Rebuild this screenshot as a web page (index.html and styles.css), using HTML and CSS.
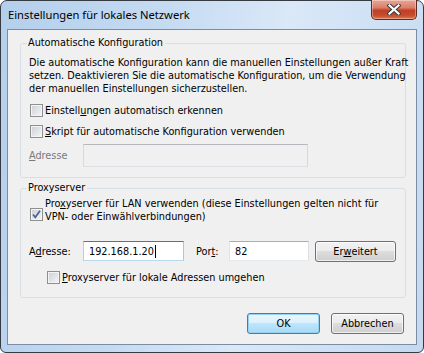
FILE: index.html
```html
<!DOCTYPE html>
<html>

<head>
    <title>Einstellungen für lokales Netzwerk</title>
    <link rel="stylesheet" href="styles.css">
</head>

<body>
    <div class="window">
        <div class="titlebar">
            <span class="title">Einstellungen für lokales Netzwerk</span>
            <button class="close" aria-label="Schließen">
                <svg width="14" height="11" viewBox="0 0 14 11">
                    <path d="M2.5 1.5 L11.5 9.5 M11.5 1.5 L2.5 9.5" stroke="#3b3b3b" stroke-width="4.2" stroke-linecap="square" fill="none"/>
                    <path d="M2.5 1.5 L11.5 9.5 M11.5 1.5 L2.5 9.5" stroke="#ffffff" stroke-width="2.2" stroke-linecap="square" fill="none"/>
                </svg>
            </button>
        </div>

        <div class="client">
            <fieldset class="group group-auto">
                <legend>Automatische Konfiguration</legend>
                <p class="desc">Die automatische Konfiguration kann die manuellen Einstellungen außer Kraft<br>setzen. Deaktivieren Sie die automatische Konfiguration, um die Verwendung<br>der manuellen Einstellungen sicherzustellen.</p>
                <label class="check">
                    <span class="box"></span>
                    <span>Einstell<u>u</u>ngen automatisch erkennen</span>
                </label>
                <label class="check">
                    <span class="box"></span>
                    <span><u>S</u>kript für automatische Konfiguration verwenden</span>
                </label>
                <div class="field-row disabled">
                    <span class="label"><u>A</u>dresse</span>
                    <span class="textbox textbox-script"></span>
                </div>
            </fieldset>

            <fieldset class="group group-proxy">
                <legend>Proxyserver</legend>
                <label class="check check-multi">
                    <span class="box checked">
                        <svg width="11" height="11" viewBox="0 0 11 11">
                            <path d="M2 5.5 L4.3 8.3 L9 1.8" stroke="#4a6193" stroke-width="1.7" fill="none"/>
                        </svg>
                    </span>
                    <span>Pro<u>x</u>yserver für LAN verwenden (diese Einstellungen gelten nicht für<br>VPN- oder Einwählverbindungen)</span>
                </label>
                <div class="field-row proxy-row">
                    <span class="label">A<u>d</u>resse:</span>
                    <span class="textbox textbox-address focused">192.168.1.20<span class="caret"></span></span>
                    <span class="label label-port">Por<u>t</u>:</span>
                    <span class="textbox textbox-port">82</span>
                    <button class="btn btn-advanced">Er<u>w</u>eitert</button>
                </div>
                <label class="check check-bypass">
                    <span class="box"></span>
                    <span><u>P</u>roxyserver für lokale Adressen umgehen</span>
                </label>
            </fieldset>

            <div class="actions">
                <button class="btn btn-default">OK</button>
                <button class="btn">Abbrechen</button>
            </div>
        </div>
    </div>
</body>

</html>
```

FILE: styles.css
```css
body {
    margin: 0;
    overflow: hidden;
    background: #ffffff;
}

.window {
    width: 424px;
    height: 353px;
    box-sizing: border-box;
    display: flex;
    flex-direction: column;
    padding: 0 6px 7px;
    border: 1px solid #363b41;
    border-radius: 7px 7px 6px 6px;
    background: linear-gradient(100deg, #b4cfec 0%, #c5dbf2 35%, #dae8f8 60%, #c4d9f0 100%);
    font-family: "DejaVu Sans Condensed", "DejaVu Sans", sans-serif;
    font-stretch: condensed;
    font-size: 10.8px;
    color: #000;
}

/* title bar */

.titlebar {
    height: 28px;
    display: flex;
    align-items: flex-start;
}

.title {
    padding-left: 1px;
    line-height: 27px;
    font-family: "Noto Sans", sans-serif;
    font-stretch: normal;
    font-size: 11.2px;
    color: #000;
}

.close {
    margin: -1px 0 0 auto;
    width: 46px;
    height: 20px;
    padding: 0;
    display: flex;
    align-items: center;
    justify-content: center;
    border: 1px solid #5c2a22;
    border-top: none;
    border-radius: 0 0 5px 5px;
    background: linear-gradient(#eba597 0%, #d9806b 40%, #c03f27 55%, #c64b2b 80%, #e0744c 100%);
    box-shadow: inset 0 0 0 1px rgba(255, 255, 255, 0.35);
}

/* client area */

.client {
    flex: 1;
    border: 1px solid #7b8ca3;
    background: #f0f0f0;
    display: flex;
    flex-direction: column;
}

.group {
    margin: 6px 10px 0 12px;
    padding: 0 8px 10px;
    border: 1px solid #d5dfe5;
    border-radius: 3px;
    min-width: 0;
}

.group legend {
    margin-left: -2px;
    padding: 0 2px 0 1px;
    line-height: 14px;
}

.group-proxy {
    margin-top: 3px;
    padding-bottom: 10px;
}

.desc {
    margin: 6px 0 0;
    line-height: 13px;
    white-space: nowrap;
}

/* checkboxes */

.check {
    display: flex;
    align-items: center;
    height: 21px;
    margin-left: 1px;
    white-space: nowrap;
}

.group-auto .check:first-of-type {
    margin-top: 5px;
}

.box {
    width: 13px;
    height: 13px;
    box-sizing: border-box;
    margin-right: 2px;
    flex: none;
    border: 1px solid #8e8f8f;
    background: linear-gradient(135deg, #cbcfd5, #f6f6f6);
    box-shadow: inset 0 0 0 1px #f4f4f4;
    display: flex;
    align-items: center;
    justify-content: center;
}

.box svg {
    display: block;
}

.check-multi {
    height: auto;
    align-items: flex-start;
    margin-top: 2px;
    line-height: 13px;
}

.check-multi .box {
    margin-top: 11px;
}

.check-bypass {
    margin: 5px 0 0 18px;
    height: 20px;
}

/* text fields */

.field-row {
    display: flex;
    align-items: center;
    margin-top: 2px;
}

.label {
    width: 54px;
    flex: none;
}

.disabled .label {
    color: #7a7a7a;
}

.textbox {
    box-sizing: border-box;
    display: flex;
    align-items: center;
    padding: 0 5px;
    background: #fff;
    border: 1px solid #abadb3;
    border-color: #abadb3 #dbdfe6 #e3e9ef #e2e3ea;
}

.textbox-script {
    width: 225px;
    height: 23px;
    background: #f0f0f0;
    border-color: #b5b8bd #d6d9dd #dcdfe3 #d6d9dd;
}

.proxy-row {
    margin-top: 17px;
}

.textbox-address {
    width: 101px;
    height: 20px;
}

.textbox.focused {
    border-color: #3d7bad #a4c9e3 #b7d9ed #b5cfe7;
}

.caret {
    width: 1px;
    height: 13px;
    margin-left: 1px;
    background: #000;
}

.label-port {
    width: 33px;
    margin-left: 12px;
}

.textbox-port {
    width: 80px;
    height: 20px;
}

/* buttons */

.btn {
    box-sizing: border-box;
    height: 21px;
    width: 73px;
    padding: 0;
    font: inherit;
    color: #000;
    border: 1px solid #707070;
    border-radius: 3px;
    background: linear-gradient(#f2f2f2 0%, #ebebeb 50%, #dddddd 50%, #cfcfcf 100%);
    box-shadow: inset 0 0 0 1px rgba(255, 255, 255, 0.7);
}

.btn-advanced {
    width: 81px;
    margin-left: 6px;
    align-self: flex-start;
    margin-top: 1px;
}

.btn-default {
    border-color: #3c7fb1;
    background: linear-gradient(#eaf6fd 0%, #d9f0fc 50%, #bee6fd 50%, #a7d9f5 100%);
    box-shadow: inset 0 0 0 1px #98d1ef;
}

.actions {
    display: flex;
    justify-content: flex-end;
    gap: 11px;
    margin: 15px 12px 0 0;
}
```
